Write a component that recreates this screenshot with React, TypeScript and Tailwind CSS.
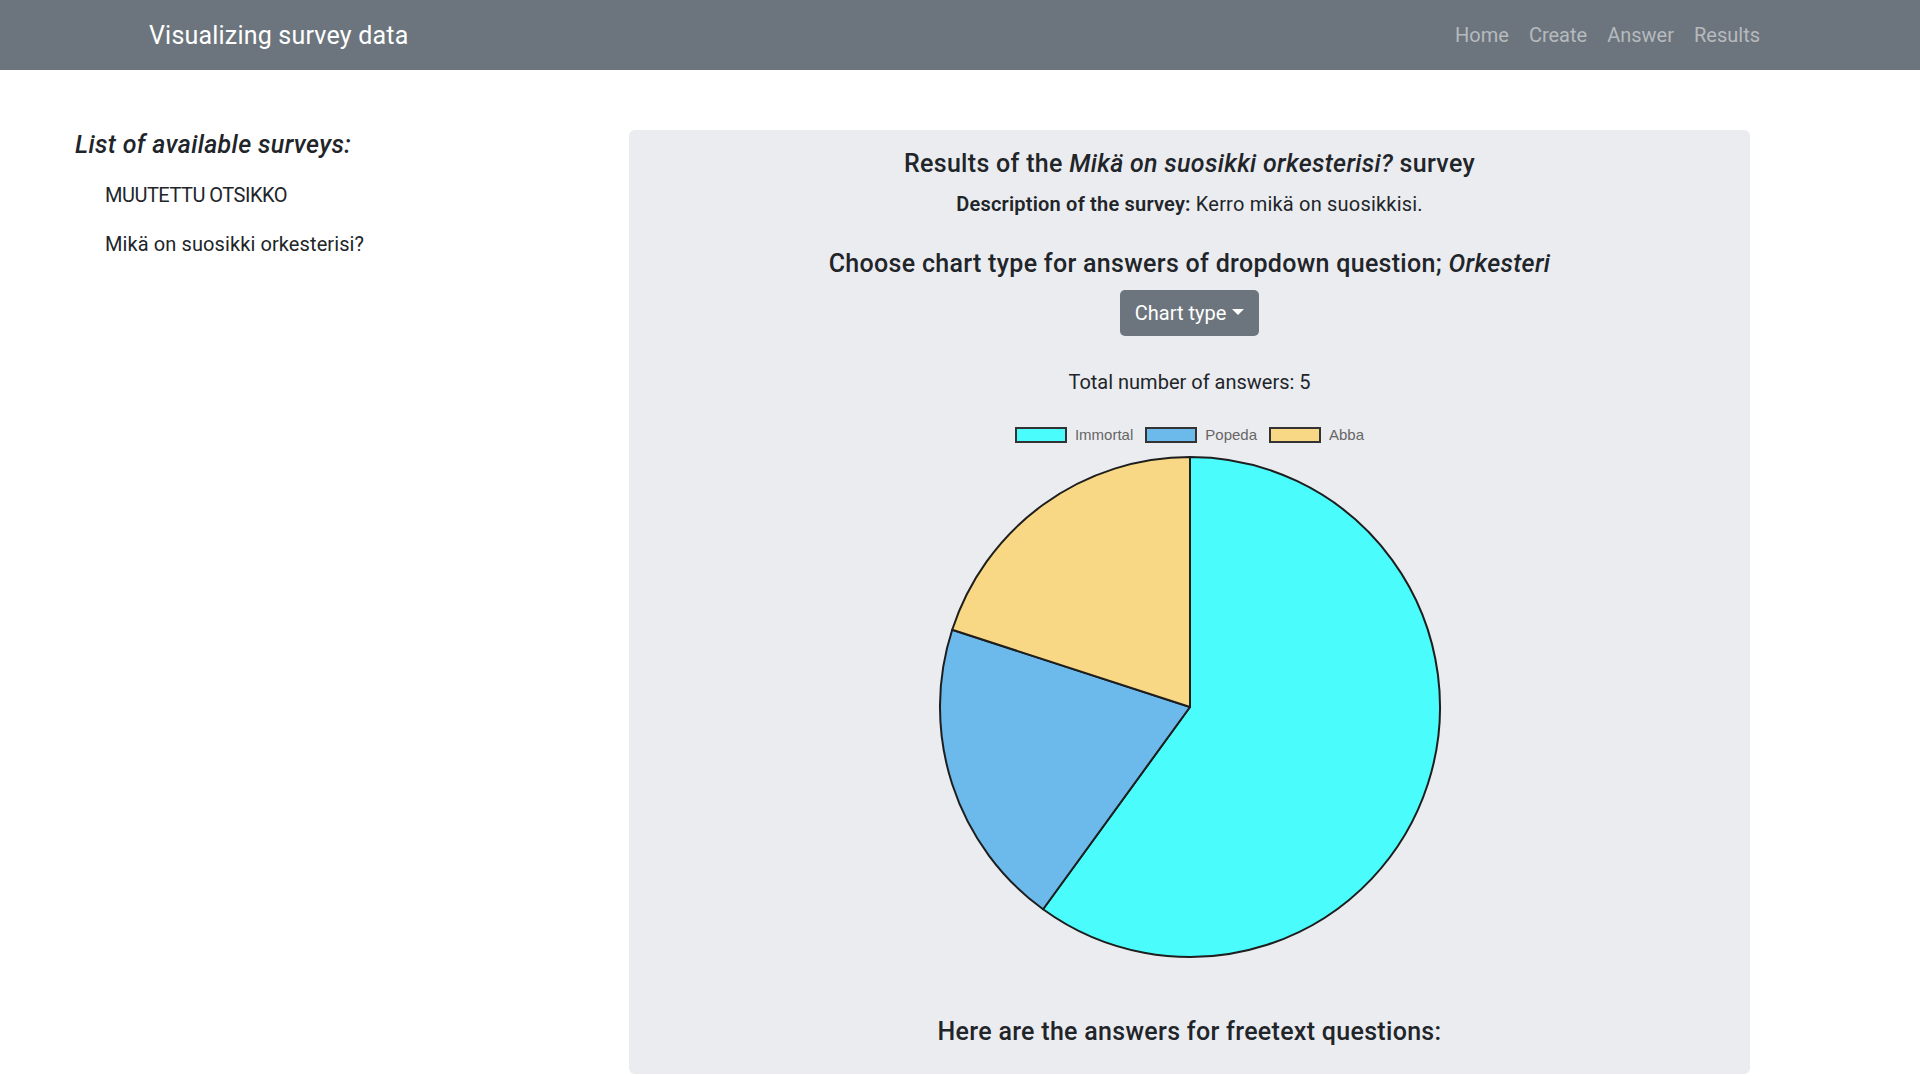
import React from "react";

const PIE = [
  { label: "Immortal", color: "#4afcfc", d: "M252,252 L252,2 A250,250 0 1,1 105.05,454.25 Z" },
  { label: "Popeda", color: "#6cb9ec", d: "M252,252 L105.05,454.25 A250,250 0 0,1 14.22,174.74 Z" },
  { label: "Abba", color: "#f8d884", d: "M252,252 L14.22,174.74 A250,250 0 0,1 252,2 Z" },
];

export default function App() {
  return (
    <div className="min-h-screen bg-white text-[#212529] font-['Roboto',sans-serif]">
      <nav className="h-[70px] bg-[#6c757d] flex items-center justify-between pl-[149px] pr-[150px]">
        <div className="text-white text-[25px] leading-none tracking-[0.2px]">Visualizing survey data</div>
        <div className="flex text-[20px] text-[#b6babe]">
          <span className="px-[10px]">Home</span>
          <span className="px-[10px]">Create</span>
          <span className="px-[10px]">Answer</span>
          <span className="px-[10px]">Results</span>
        </div>
      </nav>

      <div className="flex pl-[75px] pt-[60px]">
        <div className="w-[554px] shrink-0">
          <h2 className="text-[25px] leading-[30px] italic font-medium tracking-[0.35px]">List of available surveys:</h2>
          <ul className="mt-[20px] pl-[30px] text-[20px] leading-[30px] flex flex-col gap-[19px]">
            <li className="tracking-[-0.5px]">MUUTETTU OTSIKKO</li>
            <li className="tracking-[0.1px]">Mikä on suosikki orkesterisi?</li>
          </ul>
        </div>

        <div className="w-[1121px] shrink-0 bg-[#ebecf0] rounded-[6px] pt-[19px] pb-[27px] flex flex-col items-center">
          <h3 className="text-[25px] leading-[30px] font-medium tracking-[0.3px]">
            Results of the <i>Mikä on suosikki orkesterisi?</i> survey
          </h3>
          <p className="mt-[10px] text-[20px] leading-[30px] tracking-[0.2px]">
            <b className="font-semibold">Description of the survey:</b> Kerro mikä on suosikkisi.
          </p>
          <h3 className="mt-[30px] text-[25px] leading-[30px] font-medium tracking-[0.3px]">
            Choose chart type for answers of dropdown question; <i>Orkesteri</i>
          </h3>
          <button className="mt-[11px] h-[46px] px-[15px] rounded-[5px] bg-[#6c757d] text-white text-[20px] flex items-center gap-[6px]">
            Chart type
            <span className="inline-block w-0 h-0 border-l-[6px] border-r-[6px] border-t-[6px] border-l-transparent border-r-transparent border-t-white mt-[-2px]" />
          </button>
          <p className="mt-[31px] text-[20px] leading-[30px]">Total number of answers: 5</p>

          <div className="mt-[30px] flex items-center font-['Liberation_Sans',Arial,sans-serif] text-[15px] text-[#666] h-[16px]">
            {PIE.map((p, i) => (
              <div key={p.label} className={`flex items-center ${i > 0 ? "ml-[12px]" : ""}`}>
                <span className="w-[52px] h-[16px] border-2 border-[#333]" style={{ backgroundColor: p.color }} />
                <span className="ml-[8px]">{p.label}</span>
              </div>
            ))}
          </div>

          <svg width="504" height="504" viewBox="0 0 504 504" className="mt-[12px]">
            {PIE.map((p) => (
              <path key={p.label} d={p.d} fill={p.color} stroke="#1e1e1e" strokeWidth="2" strokeLinejoin="round" />
            ))}
          </svg>

          <h3 className="mt-[58px] text-[25px] leading-[30px] font-medium tracking-[0.3px]">Here are the answers for freetext questions:</h3>
        </div>
      </div>
    </div>
  );
}
